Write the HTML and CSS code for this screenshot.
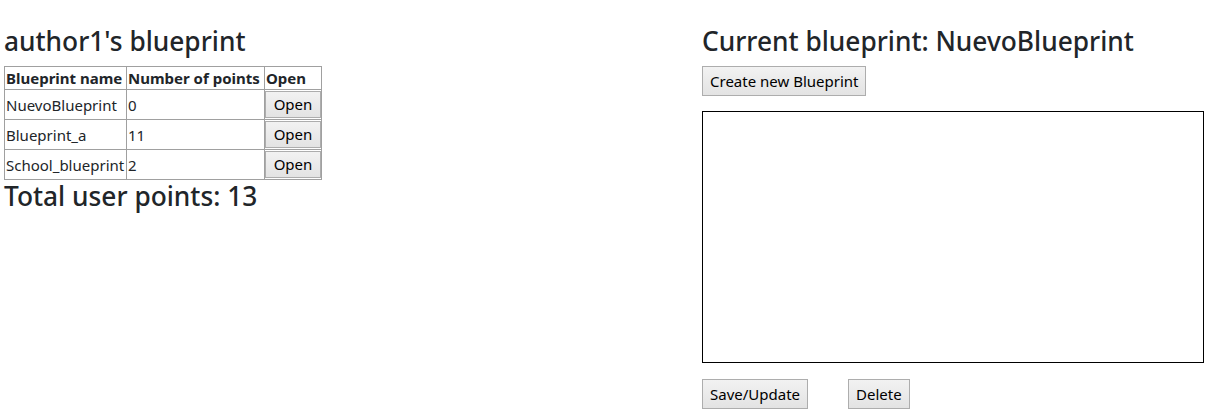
FILE: index.html
```html
<!DOCTYPE html>
<html>
<head>
<meta charset="utf-8">
<link rel="stylesheet" href="styles.css">
</head>
<body>
<div class="page">
  <section class="col-left">
    <h3 class="title">author1's blueprint</h3>
    <table class="bp-table">
      <thead>
        <tr><th class="c-name">Blueprint name</th><th class="c-points">Number of points</th><th class="c-open">Open</th></tr>
      </thead>
      <tbody>
        <tr><td>NuevoBlueprint</td><td>0</td><td class="c-open"><button class="btn btn-open">Open</button></td></tr>
        <tr><td>Blueprint_a</td><td>11</td><td class="c-open"><button class="btn btn-open">Open</button></td></tr>
        <tr><td>School_blueprint</td><td>2</td><td class="c-open"><button class="btn btn-open">Open</button></td></tr>
      </tbody>
    </table>
    <h3 class="title total">Total user points: 13</h3>
  </section>
  <section class="col-right">
    <h3 class="title">Current blueprint: NuevoBlueprint</h3>
    <button class="btn btn-create">Create new Blueprint</button>
    <canvas class="board" width="500" height="250"></canvas>
    <div class="actions">
      <button class="btn">Save/Update</button>
      <button class="btn">Delete</button>
    </div>
  </section>
</div>
</body>
</html>
```

FILE: styles.css
```css
html, body {
  margin: 0;
  padding: 0;
  background: #fff;
}
body {
  font-family: "Noto Sans", "Open Sans", sans-serif;
  font-size: 15px;
  color: #212529;
}
.page {
  display: grid;
  grid-template-columns: 698px 1fr;
  padding: 26px 0 0 4px;
}
.col-left, .col-right {
  display: flex;
  flex-direction: column;
  align-items: flex-start;
}
.title {
  margin: 0 0 9px 0;
  font-size: 26.3px;
  font-weight: 500;
  line-height: 31px;
  color: #212529;
}
.total {
  margin: 1px 0 0 0;
}
.bp-table {
  border-collapse: collapse;
  border: 1px solid #212529;
}
.bp-table th, .bp-table td {
  border: 1px solid #a0a0a0;
  padding: 1px;
  text-align: left;
  white-space: nowrap;
}
.bp-table th {
  font-weight: 700;
  height: 20px;
}
.bp-table td.c-open {
  padding: 1px 0;
}
.c-name {
  width: 119px;
}
.c-points {
  width: 135px;
}
.btn {
  font-family: inherit;
  font-size: 15px;
  color: #000;
  background: linear-gradient(#f2f2f2, #e3e3e3);
  border: 1px solid #adadad;
  border-radius: 0;
  padding: 3px 7px;
  line-height: 22px;
}
.btn-open {
  display: block;
  padding: 2px 7px;
  line-height: 21px;
  width: 56px;
}
.btn-create {
  margin-bottom: 15px;
}
.board {
  display: block;
  border: 1px solid #000;
  width: 500px;
  height: 250px;
}
.actions {
  display: flex;
  gap: 40px;
  margin-top: 16px;
}
```
